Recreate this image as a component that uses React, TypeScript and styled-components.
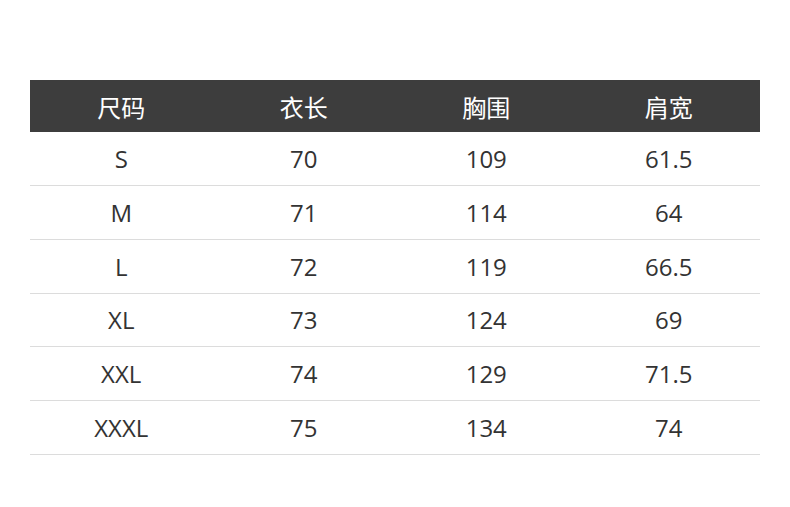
import * as React from 'react'
import styled, { createGlobalStyle } from 'styled-components'

const Global = createGlobalStyle`
  html, body {
    margin: 0;
    padding: 0;
    background: #fff;
  }
  body {
    font-family: "Open Sans", "Noto Sans CJK SC", sans-serif;
  }
`

const Page = styled.div`
  width: 790px;
  height: 507px;
  padding: 80px 30px 0;
  box-sizing: border-box;
`

const Table = styled.table`
  width: 730px;
  border-collapse: collapse;
  table-layout: fixed;
  color: #333;
  font-size: 24px;
`

const Head = styled.th`
  height: 52px;
  padding: 0;
  background: #3d3d3d;
  color: #fff;
  font-weight: normal;
  font-family: "Noto Sans CJK SC", sans-serif;
  font-size: 24px;
  text-align: center;
`

const Cell = styled.td`
  height: 52.85px;
  padding: 0;
  text-align: center;
  border-bottom: 1px solid #dcdcdc;
`

const headers = ['尺码', '衣长', '胸围', '肩宽']

const rows = [
  ['S', '70', '109', '61.5'],
  ['M', '71', '114', '64'],
  ['L', '72', '119', '66.5'],
  ['XL', '73', '124', '69'],
  ['XXL', '74', '129', '71.5'],
  ['XXXL', '75', '134', '74'],
]

export default function App() {
  return (
    <>
      <Global />
      <Page>
        <Table>
          <thead>
            <tr>
              {headers.map(h => (
                <Head key={h}>{h}</Head>
              ))}
            </tr>
          </thead>
          <tbody>
            {rows.map(r => (
              <tr key={r[0]}>
                {r.map((c, i) => (
                  <Cell key={i}>{c}</Cell>
                ))}
              </tr>
            ))}
          </tbody>
        </Table>
      </Page>
    </>
  )
}
